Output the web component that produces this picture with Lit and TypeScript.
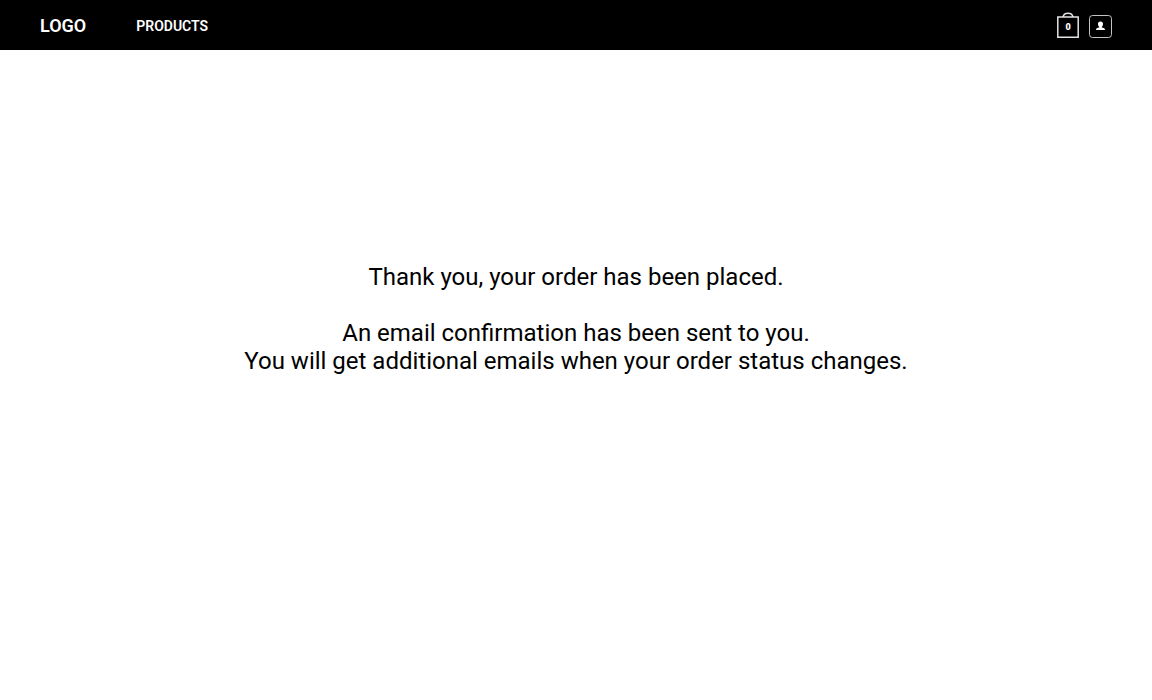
import { LitElement, html, css } from "lit";
import { customElement, property } from "lit/decorators.js";

@customElement("app-root")
export class AppRoot extends LitElement {
  @property({ type: Number }) cartCount = 0;

  static styles = css`
    :host {
      display: flex;
      flex-direction: column;
      min-height: 100vh;
      background: #fff;
      color: #000;
      font-family: Roboto, sans-serif;
    }
    .bar {
      display: flex;
      align-items: center;
      justify-content: space-between;
      height: 50px;
      padding: 0 40px;
      background: #000;
    }
    .links {
      display: flex;
      align-items: center;
      gap: 50px;
    }
    a {
      color: #fff;
      text-decoration: none;
      font-weight: 600;
    }
    .logo {
      font-size: 18px;
    }
    .link {
      padding-top: 2px;
      font-size: 14px;
    }
    .tools {
      display: flex;
      align-items: flex-end;
      gap: 10px;
    }
    .cart,
    .user {
      display: block;
    }
    .user {
      padding: 0;
      border: 0;
      background: none;
    }
    svg {
      display: block;
    }
    .count {
      font-size: 9px;
      font-weight: 900;
      fill: #fff;
      text-anchor: middle;
    }
    main {
      flex: 1;
      display: flex;
      flex-direction: column;
      align-items: center;
      justify-content: center;
      gap: 28px;
      padding: 0 20px 112px;
      font-size: 24px;
      line-height: 28px;
      text-align: center;
    }
    p {
      margin: 0;
    }
  `;

  render() {
    return html`
      <header class="bar">
        <nav class="links">
          <a class="logo" href="#">LOGO</a>
          <a class="link" href="#products">PRODUCTS</a>
        </nav>
        <div class="tools">
          <a class="cart" href="#cart" aria-label="Cart">
            <svg width="22" height="26" viewBox="0 0 22 26">
              <path d="M0.800 5H21.200V25.200H0.800Z M6 5C6.500 2.500 8 1.200 11 1.200C14 1.200 15.500 2.500 16 5" fill="none" stroke="#e4e4e4" stroke-width="1.5" />
              <text class="count" x="11" y="18">${this.cartCount}</text>
            </svg>
          </a>
          <button class="user" aria-label="Account">
            <svg width="23" height="23" viewBox="0 0 23 23">
              <rect x="0.5" y="0.5" width="22" height="22" rx="3" fill="none" stroke="#c4c4c4" />
              <path d="M11.500 6.500C13.300 6.500 14 7.600 14 9C14 10.400 13.300 11.300 12.800 12V12.600C14.500 12.900 16 13.300 16 15H7C7 13.300 8.500 12.900 10.200 12.600V12C9.700 11.300 9 10.400 9 9C9 7.600 9.700 6.500 11.500 6.500Z" fill="#fff" />
            </svg>
          </button>
        </div>
      </header>
      <main>
        <p>Thank you, your order has been placed.</p>
        <p>
          An email confirmation has been sent to you.<br />
          You will get additional emails when your order status changes.
        </p>
      </main>
    `;
  }
}
